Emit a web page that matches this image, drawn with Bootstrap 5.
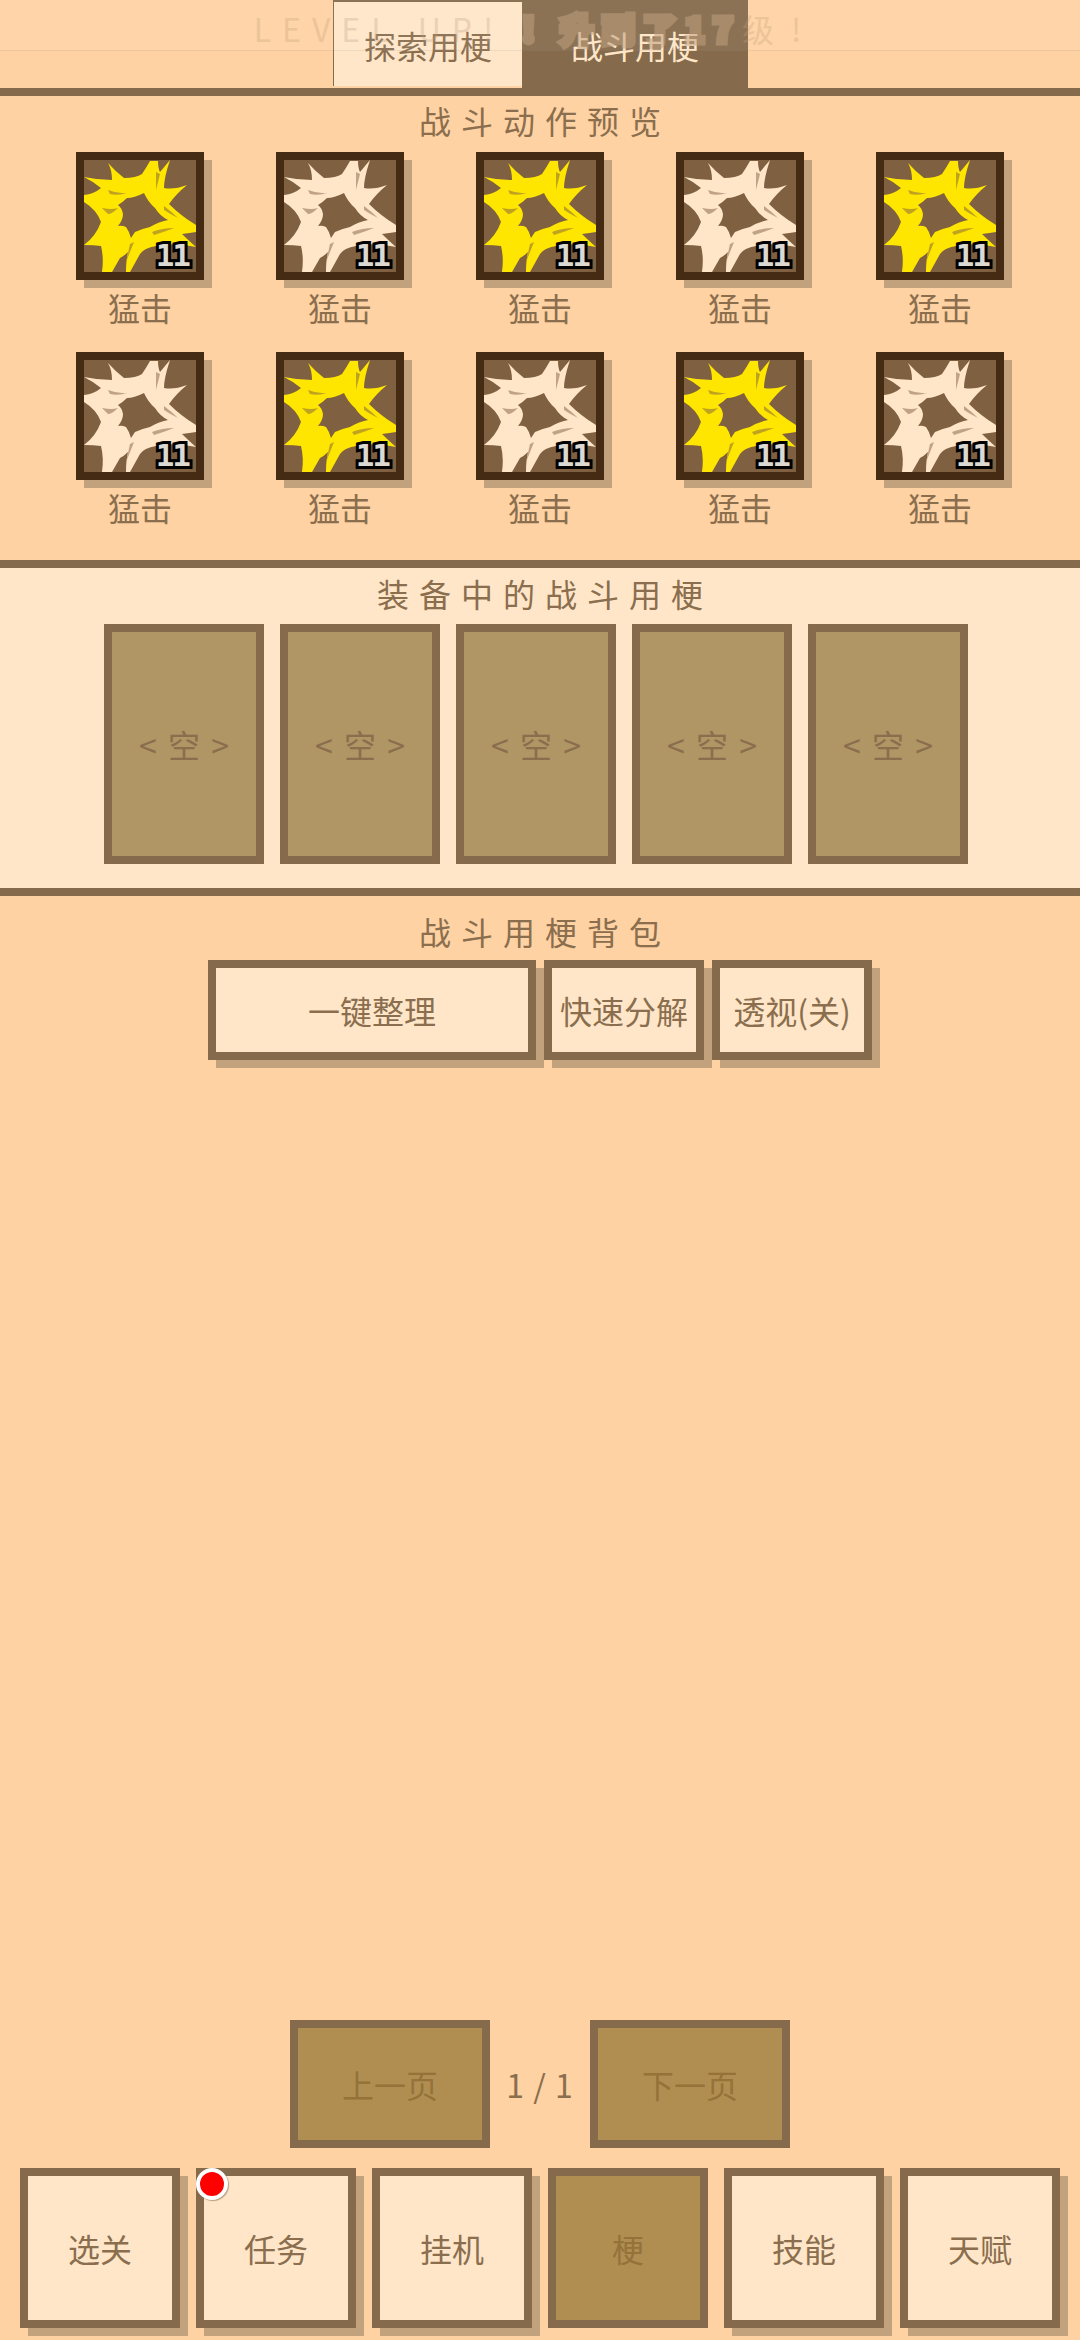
<!DOCTYPE html>
<html lang="zh">
<head>
    <meta charset="UTF-8">
    <meta name="viewport" content="width=device-width, initial-scale=1.0">
    <title>战斗用梗</title>
    <link href="https://cdn.jsdelivr.net/npm/bootstrap@5.3.0/dist/css/bootstrap.min.css" rel="stylesheet">
    <style>
        body {
            margin: 0;
            width: 1080px;
            height: 2340px;
            overflow: hidden;
            background: #ffd2a3;
            color: #8a6e4e;
            font-family: "Noto Sans CJK SC", "Liberation Sans", sans-serif;
            font-size: 32px;
            line-height: 1;
        }

        .game-page { height: 2340px; }

        /* top tabs */
        .tab-bar { height: 88px; padding-left: 1px; }
        .tab-item {
            height: 88px;
            font-size: 32px;
            padding-top: 2px;
        }
        .tab-off {
            width: 189px;
            height: 86px;
            background: #ffe6c9;
            border-left: 1px solid #856a4b;
            border-top: 2px solid #856a4b;
        }
        .tab-on {
            width: 226px;
            background: #856a4b;
            color: #ffe6c9;
        }

        .level-banner {
            top: 0;
            left: 0;
            width: 100%;
            height: 51px;
            background: rgba(255, 255, 255, 0.06);
            border-bottom: 1px solid rgba(133, 106, 75, 0.12);
            font-size: 32px;
            letter-spacing: 11px;
            padding: 12px 8px 0 0;
        }
        .level-text {
            color: #bea07d;
            opacity: 0.3;
        }
        .level-end { letter-spacing: 17px; }
        .level-strong {
            -webkit-text-stroke: 7px #bea07d;
            font-weight: 700;
            letter-spacing: 9.5px;
            opacity: 0.55;
        }

        .line-sep { height: 8px; background: #856a4b; }

        .sec-title {
            font-size: 32px;
            letter-spacing: 10px;
            padding-left: 10px;
            text-align: center;
        }

        /* battle preview */
        .preview-box { height: 464px; padding-top: 8px; }
        .preview-title { height: 48px; }
        .tile-row { height: 200px; }
        .tile-cell { width: 200px; }
        .act-tile {
            width: 128px;
            height: 128px;
            border: 8px solid #452b14;
            background: #7f6040;
            box-shadow: 8px 8px 0 #c2a27c;
        }
        .act-tile svg { display: block; width: 112px; height: 112px; }
        .tile-yellow { color: #ffe600; }
        .tile-white { color: #ffe6c9; }
        .tile-num {
            right: 7px;
            bottom: 1px;
            font-family: "DejaVu Sans Mono", monospace;
            font-weight: 700;
            font-size: 31px;
            line-height: 1;
            letter-spacing: -2px;
            color: #dcd8d2;
            -webkit-text-stroke: 6px #000;
            paint-order: stroke fill;
        }
        .tile-label { font-size: 32px; margin-top: 11px; }

        /* equipped */
        .equip-box {
            height: 320px;
            background: #ffe6c9;
            padding-top: 9px;
        }
        .equip-title { height: 47px; }
        .slot-row { gap: 16px; padding-right: 8px; }
        .slot-box {
            width: 160px;
            height: 240px;
            border: 8px solid #856a4b;
            background: #b09665;
            word-spacing: 4px;
        }

        /* bag */
        .bag-box { height: 1272px; padding-top: 19px; }
        .bag-title { height: 45px; }
        .bag-tools { gap: 8px; }
        .act-btn {
            height: 100px;
            border: 8px solid #856a4b;
            background: #ffe6c9;
            box-shadow: 8px 8px 0 #c2a27c;
            color: #8a6e4e;
            font-size: 32px;
            white-space: nowrap;
        }
        .btn-wide { width: 328px; }
        .btn-mid { width: 160px; }

        .pager-row { margin-top: 960px; height: 128px; }
        .page-btn {
            width: 200px;
            height: 128px;
            border: 8px solid #856a4b;
            background: #b08e52;
            color: #947239;
            font-size: 32px;
        }
        .page-num { width: 100px; font-size: 32px; letter-spacing: 1px; }

        /* bottom nav */
        .nav-row { gap: 16px; padding: 0 20px; height: 172px; }
        .nav-btn {
            position: relative;
            width: 160px;
            height: 160px;
            border: 8px solid #856a4b;
            background: #ffe6c9;
            box-shadow: 8px 8px 0 #c2a27c;
            color: #8a6e4e;
            font-size: 32px;
        }
        .nav-on {
            background: #b08e52;
            color: #947239;
            box-shadow: none;
        }
        .red-dot {
            top: -8px;
            left: -8px;
            width: 32px;
            height: 32px;
            background: #f00;
            border: 4px solid #fff;
            box-shadow: 1px 1px 1px rgba(133, 106, 75, 0.6);
        }
    </style>
</head>
<body>
    <svg width="0" height="0" class="position-absolute">
        <symbol id="burst" viewBox="0 0 112 112">
            <path fill="currentColor" fill-rule="evenodd" d="M66 1L74 1Q74 8 76 12L86 0Q80 18 80 28Q90 30 103 25Q92 34 85 44Q97 56 112 65L112 72Q106 73 98 74Q104 80 112 87Q90 82 72 86Q60 88 56 94L46 112L42 112Q42 100 44 92Q40 96 36 98L28 112L18 112Q20 98 17 86Q10 85 0 85Q12 76 17 62Q13 50 0 42L0 35Q10 34 17 28Q10 22 0 17Q14 20 28 20Q28 10 24 3Q32 12 40 18Q52 18 58 14Q62 8 66 1Z M60 33Q64 42 71 48Q76 56 84 60Q74 62 66 67Q57 69 51 72L47 78Q45 71 42 67Q38 65 34 66Q39 60 39 54Q38 48 34 45Q39 42 43 38Q50 38 60 33Z"/>
            <path fill="#7f6040" opacity="0.5" d="M24 30Q34 34 44 33Q34 36 26 34Z M18 48Q28 50 34 48Q28 54 24 54Z M72 12L76 14L72 30Z M80 46Q88 52 94 58Q86 54 80 50Z M68 72Q78 68 90 68Q80 72 70 75Z M46 84L50 82L42 102Z"/>
        </symbol>
    </svg>

    <div class="game-page d-flex flex-column position-relative">
        <!-- tabs -->
        <div class="tab-bar d-flex justify-content-center">
            <div class="tab-item tab-off d-flex align-items-center justify-content-center">探索用梗</div>
            <div class="tab-item tab-on d-flex align-items-center justify-content-center">战斗用梗</div>
        </div>
        <div class="line-sep"></div>

        <!-- battle preview -->
        <div class="preview-box">
            <div class="preview-title sec-title">战斗动作预览</div>
            <div class="tile-row d-flex justify-content-center">
                <div class="tile-cell d-flex flex-column align-items-center">
                    <div class="act-tile tile-yellow position-relative"><svg><use href="#burst"/></svg><span class="tile-num position-absolute">11</span></div>
                    <div class="tile-label">猛击</div>
                </div>
                <div class="tile-cell d-flex flex-column align-items-center">
                    <div class="act-tile tile-white position-relative"><svg><use href="#burst"/></svg><span class="tile-num position-absolute">11</span></div>
                    <div class="tile-label">猛击</div>
                </div>
                <div class="tile-cell d-flex flex-column align-items-center">
                    <div class="act-tile tile-yellow position-relative"><svg><use href="#burst"/></svg><span class="tile-num position-absolute">11</span></div>
                    <div class="tile-label">猛击</div>
                </div>
                <div class="tile-cell d-flex flex-column align-items-center">
                    <div class="act-tile tile-white position-relative"><svg><use href="#burst"/></svg><span class="tile-num position-absolute">11</span></div>
                    <div class="tile-label">猛击</div>
                </div>
                <div class="tile-cell d-flex flex-column align-items-center">
                    <div class="act-tile tile-yellow position-relative"><svg><use href="#burst"/></svg><span class="tile-num position-absolute">11</span></div>
                    <div class="tile-label">猛击</div>
                </div>
            </div>
            <div class="tile-row d-flex justify-content-center">
                <div class="tile-cell d-flex flex-column align-items-center">
                    <div class="act-tile tile-white position-relative"><svg><use href="#burst"/></svg><span class="tile-num position-absolute">11</span></div>
                    <div class="tile-label">猛击</div>
                </div>
                <div class="tile-cell d-flex flex-column align-items-center">
                    <div class="act-tile tile-yellow position-relative"><svg><use href="#burst"/></svg><span class="tile-num position-absolute">11</span></div>
                    <div class="tile-label">猛击</div>
                </div>
                <div class="tile-cell d-flex flex-column align-items-center">
                    <div class="act-tile tile-white position-relative"><svg><use href="#burst"/></svg><span class="tile-num position-absolute">11</span></div>
                    <div class="tile-label">猛击</div>
                </div>
                <div class="tile-cell d-flex flex-column align-items-center">
                    <div class="act-tile tile-yellow position-relative"><svg><use href="#burst"/></svg><span class="tile-num position-absolute">11</span></div>
                    <div class="tile-label">猛击</div>
                </div>
                <div class="tile-cell d-flex flex-column align-items-center">
                    <div class="act-tile tile-white position-relative"><svg><use href="#burst"/></svg><span class="tile-num position-absolute">11</span></div>
                    <div class="tile-label">猛击</div>
                </div>
            </div>
        </div>
        <div class="line-sep"></div>

        <!-- equipped -->
        <div class="equip-box">
            <div class="equip-title sec-title">装备中的战斗用梗</div>
            <div class="slot-row d-flex justify-content-center">
                <div class="slot-box d-flex align-items-center justify-content-center">&lt; 空 &gt;</div>
                <div class="slot-box d-flex align-items-center justify-content-center">&lt; 空 &gt;</div>
                <div class="slot-box d-flex align-items-center justify-content-center">&lt; 空 &gt;</div>
                <div class="slot-box d-flex align-items-center justify-content-center">&lt; 空 &gt;</div>
                <div class="slot-box d-flex align-items-center justify-content-center">&lt; 空 &gt;</div>
            </div>
        </div>
        <div class="line-sep"></div>

        <!-- bag -->
        <div class="bag-box">
            <div class="bag-title sec-title">战斗用梗背包</div>
            <div class="bag-tools d-flex justify-content-center">
                <div class="act-btn btn-wide d-flex align-items-center justify-content-center">一键整理</div>
                <div class="act-btn btn-mid d-flex align-items-center justify-content-center">快速分解</div>
                <div class="act-btn btn-mid d-flex align-items-center justify-content-center">透视(关)</div>
            </div>
            <div class="pager-row d-flex justify-content-center align-items-center">
                <div class="page-btn d-flex align-items-center justify-content-center">上一页</div>
                <div class="page-num text-center">1 / 1</div>
                <div class="page-btn d-flex align-items-center justify-content-center">下一页</div>
            </div>
        </div>

        <!-- bottom nav -->
        <div class="nav-row d-flex">
            <div class="nav-btn d-flex align-items-center justify-content-center">选关</div>
            <div class="nav-btn d-flex align-items-center justify-content-center">任务<span class="red-dot position-absolute rounded-circle"></span></div>
            <div class="nav-btn d-flex align-items-center justify-content-center">挂机</div>
            <div class="nav-btn nav-on d-flex align-items-center justify-content-center">梗</div>
            <div class="nav-btn d-flex align-items-center justify-content-center">技能</div>
            <div class="nav-btn d-flex align-items-center justify-content-center">天赋</div>
        </div>

        <!-- level up toast over the tabs -->
        <div class="level-banner position-absolute text-center"><span class="level-text">LEVEL UP! </span><span class="level-strong">! 升到了17</span><span class="level-text level-end">级!</span></div>
    </div>
</body>
</html>
